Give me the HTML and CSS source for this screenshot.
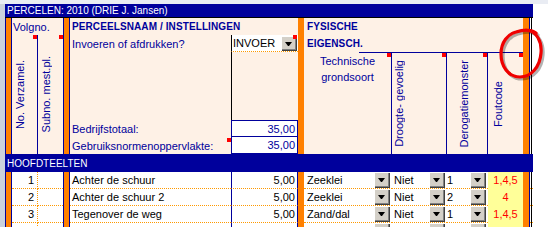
FILE: index.html
```html
<!DOCTYPE html>
<html lang="nl">
<head>
<meta charset="utf-8">
<title>Percelen</title>
<link rel="stylesheet" href="styles.css">
</head>
<body>
<div class="screen">
  <div class="gutter"></div>
  <div class="sheet">
    <div class="title">PERCELEN: 2010 (DRIE J. Jansen)</div>
    <div class="head">
      <div class="bar nv g-a"></div>
      <div class="h-volg">Volgno.</div>
      <div class="h-noverz vtext cm"><span>No. Verzamel.</span></div>
      <div class="h-subno vtext cm"><span>Subno. mest.pl.</span></div>
      <div class="bar nv g-d"></div>
      <div class="h-naam bold">PERCEELSNAAM / INSTELLINGEN</div>
      <div class="h-invlabel">Invoeren of afdrukken?</div>
      <div class="h-inv cm cm-r1"><span>INVOER</span><i class="btn"></i></div>
      <div class="h-blank"></div>
      <div class="h-bedrijf">Bedrijfstotaal:</div>
      <div class="h-box h-box1">35,00</div>
      <div class="h-gebr cm cm-t1">Gebruiksnormenoppervlakte:</div>
      <div class="h-box h-box2">35,00</div>
      <div class="bar g-g"></div>
      <div class="h-fys bold">FYSISCHE</div>
      <div class="h-eig bold">EIGENSCH.</div>
      <div class="h-tech cm cm-t1">Technische grondsoort</div>
      <div class="h-droog vtext cm"><span>Droogte- gevoelig</span></div>
      <div class="h-derog vtext cm"><span>Derogatiemonster</span></div>
      <div class="h-fout vtext cm"><span>Foutcode</span></div>
      <div class="bar nr g-l"></div>
      <div class="edge g-m"></div>
    </div>
    <div class="section">HOOFDTEELTEN</div>
    <div class="row">
      <div class="bar nv"></div>
      <div class="c num">1</div>
      <div class="c sub"></div>
      <div class="bar nv"></div>
      <div class="c name">Achter de schuur</div>
      <div class="c val">5,00</div>
      <div class="bar"></div>
      <div class="c sel sel-h"><span>Zeeklei</span><i class="btn"></i></div>
      <div class="c sel sel-i"><span>Niet</span><i class="btn"></i></div>
      <div class="c sel sel-j"><span>1</span><i class="btn"></i></div>
      <div class="c fout">1,4,5</div>
      <div class="bar nr"></div>
      <div class="c edge"></div>
    </div>
    <div class="row">
      <div class="bar nv"></div>
      <div class="c num">2</div>
      <div class="c sub"></div>
      <div class="bar nv"></div>
      <div class="c name">Achter de schuur 2</div>
      <div class="c val">5,00</div>
      <div class="bar"></div>
      <div class="c sel sel-h"><span>Zeeklei</span><i class="btn"></i></div>
      <div class="c sel sel-i"><span>Niet</span><i class="btn"></i></div>
      <div class="c sel sel-j"><span>2</span><i class="btn"></i></div>
      <div class="c fout">4</div>
      <div class="bar nr"></div>
      <div class="c edge"></div>
    </div>
    <div class="row">
      <div class="bar nv"></div>
      <div class="c num">3</div>
      <div class="c sub"></div>
      <div class="bar nv"></div>
      <div class="c name">Tegenover de weg</div>
      <div class="c val">5,00</div>
      <div class="bar"></div>
      <div class="c sel sel-h"><span>Zand/dal</span><i class="btn"></i></div>
      <div class="c sel sel-i"><span>Niet</span><i class="btn"></i></div>
      <div class="c sel sel-j"><span>1</span><i class="btn"></i></div>
      <div class="c fout">1,4,5</div>
      <div class="bar nr"></div>
      <div class="c edge"></div>
    </div>
    <div class="row">
      <div class="bar nv"></div>
      <div class="c num"></div>
      <div class="c sub"></div>
      <div class="bar nv"></div>
      <div class="c name"></div>
      <div class="c val"></div>
      <div class="bar"></div>
      <div class="c sel sel-h"><span></span><i class="btn"></i></div>
      <div class="c sel sel-i"><span></span><i class="btn"></i></div>
      <div class="c sel sel-j"><span></span><i class="btn"></i></div>
      <div class="c fout"></div>
      <div class="bar nr"></div>
      <div class="c edge"></div>
    </div>
  </div>
</div>
<svg class="mark" width="548" height="227" viewBox="0 0 548 227" aria-hidden="true">
  <path class="ring-shadow" d="M 526 30 C 537 31, 542 42, 541 53 C 540 67, 531 77, 520 77 C 508 77, 501 66, 501 54 C 501 42, 508 34, 516 32 C 522 30, 530 29, 536 33"/>
  <path class="ring" d="M 526 30 C 537 31, 542 42, 541 53 C 540 67, 531 77, 520 77 C 508 77, 501 66, 501 54 C 501 42, 508 34, 516 32 C 522 30, 530 29, 536 33"/>
</svg>
</body>
</html>
```
FILE: styles.css
```css
:root {
  --navy: #00009c;
  --orange: #ff8000;
  --peach: #fef1e6;
  --dot: #ff9900;
  --cols: 7px 26px 25px 7px 161px 67px 6px 88px 55px 41px 35px 7px 3px;
}
* { box-sizing: border-box; }
body {
  margin: 0;
  width: 548px;
  height: 227px;
  overflow: hidden;
  position: relative;
  background: #fff;
  font-family: "Liberation Sans", Arial, sans-serif;
  font-size: 11px;
  color: #000;
}
.screen {
  display: flex;
  height: 227px;
  overflow: hidden;
  border-top: 4px solid #e9ecf3;
}
.gutter { width: 5px; flex: none; background: #cbd1dc; }
.sheet { width: 528px; flex: none; }

.title {
  height: 14px;
  background: var(--navy);
  border-bottom: 1px solid #000;
  color: #fff;
  font-size: 10px;
  line-height: 13px;
  padding-left: 2px;
  white-space: nowrap;
}

.head {
  display: grid;
  grid-template-columns: var(--cols);
  grid-template-rows: 17px 17px 68px 17px 17px;
  background: var(--peach);
  color: var(--navy);
}
.head > div { display: flex; align-items: center; white-space: nowrap; position: relative; }

.bar { background: var(--orange); }
.bar.nv { border-left: 1px solid var(--navy); border-right: 1px solid var(--navy); }
.bar.nr { border-right: 1px solid var(--navy); }
.bold { font-weight: bold; font-size: 10px; letter-spacing: 0.1px; }

.g-a { grid-column: 1; grid-row: 1 / 6; }
.g-d { grid-column: 4; grid-row: 1 / 6; }
.g-g { grid-column: 7; grid-row: 1 / 6; }
.g-l { grid-column: 12; grid-row: 1 / 6; }
.g-m { grid-column: 13; grid-row: 1 / 6; }

.edge {
  background: linear-gradient(to right, #fff 1px, #000 1px, #000 2px, #fff 2px);
}

.h-volg { grid-column: 2 / 4; grid-row: 1; padding-left: 1px; }
.h-noverz { grid-column: 2; grid-row: 2 / 6; border-right: 1px solid var(--navy); padding-left: 2px; }
.h-subno { grid-column: 3; grid-row: 2 / 6; padding-left: 2px; }

.vtext span {
  writing-mode: vertical-rl;
  transform: rotate(180deg);
  line-height: 13px;
  white-space: nowrap;
}

.h-naam { grid-column: 5 / 7; grid-row: 1; padding-left: 2px; }
.h-invlabel { grid-column: 5; grid-row: 2; padding-left: 2px; }
.h-inv {
  grid-column: 6; grid-row: 2;
  background: #fff;
  color: #000;
  border-left: 1px solid #000;
  border-bottom: 1px dotted var(--dot);
  padding-left: 1px;
  padding-right: 1px;
  align-items: flex-start !important;
}
.h-inv span { align-self: center; }
.h-inv .btn { margin-left: auto; margin-top: 1px; height: 15px; }
.h-blank { grid-column: 6; grid-row: 3; border-left: 1px solid #000; }
.h-bedrijf { grid-column: 5; grid-row: 4; padding-left: 2px; padding-top: 1px; }
.h-gebr { grid-column: 5; grid-row: 5; padding-left: 2px; padding-top: 1px; }
.h-box {
  grid-column: 6;
  background: #fff;
  border: 1px solid var(--navy);
  justify-content: flex-end;
  padding-right: 2px;
}
.h-box1 { grid-row: 4; }
.h-box2 { grid-row: 5; border-top: none; }

.h-fys { grid-column: 8 / 12; grid-row: 1; padding-left: 3px; }
.h-eig { grid-column: 8 / 12; grid-row: 2; padding-left: 3px; }
.h-tech {
  grid-column: 8; grid-row: 3 / 6;
  border-right: 1px solid var(--navy);
  align-items: flex-start !important;
  justify-content: center;
  text-align: center;
  white-space: normal !important;
  line-height: 16px;
  padding-top: 1px;
  background: linear-gradient(var(--navy), var(--navy)) no-repeat right top / 32px 1px;
}
.h-droog { grid-column: 9; grid-row: 3 / 6; border-top: 1px solid var(--navy); border-right: 1px solid var(--navy); padding-left: 1px; }
.h-derog { grid-column: 10; grid-row: 3 / 6; border-top: 1px solid var(--navy); border-right: 1px solid var(--navy); padding-left: 11px; }
.h-fout { grid-column: 11; grid-row: 3 / 6; border-top: 1px solid var(--navy); padding-left: 4px; }

.cm::after {
  content: "";
  position: absolute;
  top: 0;
  right: 0;
  width: 4px;
  height: 4px;
  background: #ff0000;
  z-index: 2;
}
.cm-t1::after { top: 1px; }
.cm-r1::after { right: 1px; }

.section {
  height: 18px;
  background: var(--navy);
  color: #fff;
  font-size: 10px;
  padding-left: 2px;
  display: flex;
  align-items: center;
}

.row {
  display: grid;
  grid-template-columns: var(--cols);
  height: 17px;
}
.c {
  background: #fff;
  border-bottom: 1px dotted var(--dot);
  display: flex;
  align-items: center;
  white-space: nowrap;
  overflow: hidden;
}
.c.edge {
  background: linear-gradient(to right, #fff 1px, #000 1px, #000 2px, #fff 2px);
}
.num { justify-content: flex-end; padding-right: 3px; border-right: 1px dotted var(--dot); }
.name { padding-left: 2px; }
.val {
  justify-content: flex-end;
  padding-right: 2px;
  border-left: 1px solid var(--navy);
  border-right: 1px solid var(--navy);
}
.sel { align-items: stretch; padding-right: 2px; }
.sel span { align-self: center; flex: 1; }
.sel-h { padding-left: 3px; }
.sel-i { padding-left: 2px; }
.sel-j { padding-left: 0; }
.fout {
  background: #ffff99;
  color: #ff0000;
  justify-content: center;
  border-bottom: 1px solid #ffff99;
}

.btn {
  display: block;
  width: 16px;
  flex: none;
  position: relative;
  background: #d4d0c8;
  box-shadow: inset 1px 1px #ffffff, inset -1px -1px #404040, inset -2px -2px #808080;
}
.btn::after {
  content: "";
  position: absolute;
  left: 4px;
  top: 6px;
  width: 1px;
  height: 0;
  border-left: 3px solid transparent;
  border-right: 3px solid transparent;
  border-top: 4px solid #000;
}

.mark {
  position: absolute;
  left: 0;
  top: 0;
  z-index: 10;
  pointer-events: none;
}
.ring, .ring-shadow {
  fill: none;
  stroke-width: 3.2;
  stroke-linecap: round;
  stroke-linejoin: round;
}
.ring { stroke: #f00000; }
.ring-shadow {
  stroke: rgba(0, 0, 0, 0.3);
  transform: translate(2px, 2px);
}
```
